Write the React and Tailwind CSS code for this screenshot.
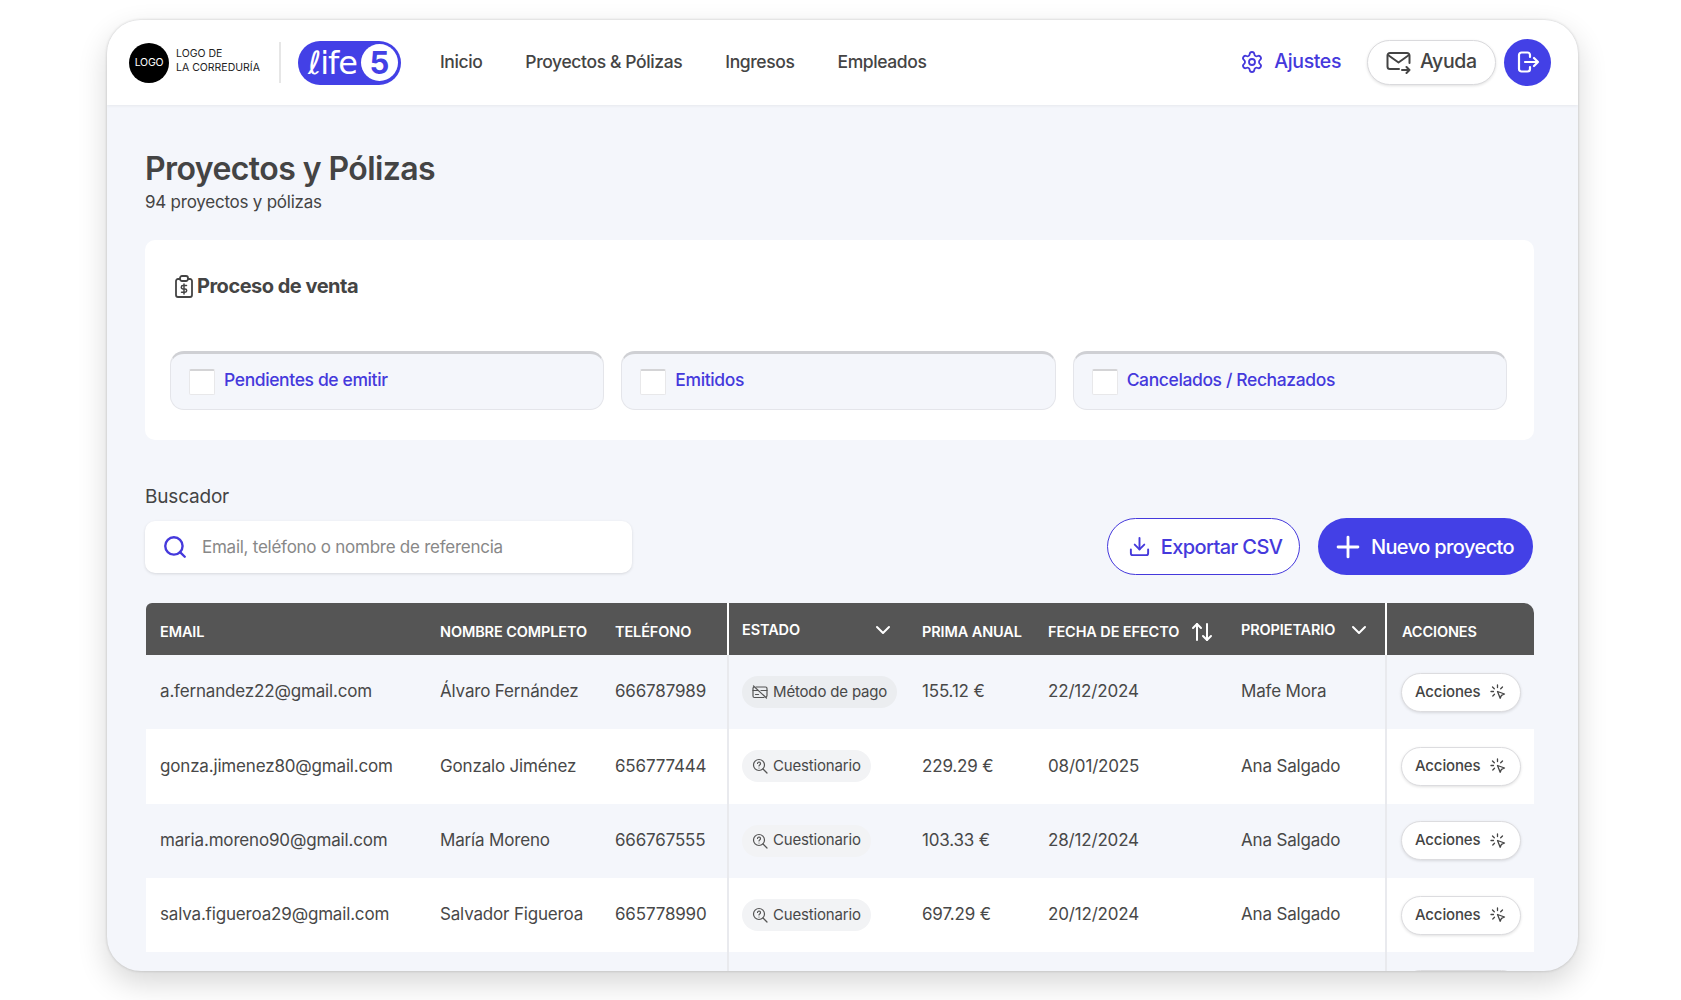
import React from "react";
import { Settings, Download, Plus, Search, ArrowUpDown, ChevronDown } from "lucide-react";

const MailArrow = () => (
  <svg width="25" height="23" viewBox="0 0 25 23" fill="none" stroke="#444" strokeWidth="2" strokeLinecap="round" strokeLinejoin="round">
    <path d="M13 18H4a2.500 2.500 0 0 1-2.500-2.500v-11A2.500 2.500 0 0 1 4 2h17a2.500 2.500 0 0 1 2.500 2.500V12" />
    <path d="M2 4l10.500 7.500L23 4" />
    <path d="M16 19h7.500M20.500 16l3 3-3 3" />
  </svg>
);
const Logout = () => (
  <svg width="24" height="24" viewBox="0 0 24 24" fill="none" stroke="#fff" strokeWidth="2.200" strokeLinecap="round" strokeLinejoin="round">
    <path d="M14 7V5a2.500 2.500 0 0 0-2.500-2.500h-6A2.500 2.500 0 0 0 3 5v14a2.500 2.500 0 0 0 2.500 2.500h6A2.500 2.500 0 0 0 14 19v-2" />
    <path d="M9 12h13M18 8l4 4-4 4" />
  </svg>
);
const ClipboardDollar = () => (
  <svg width="18" height="23" viewBox="0 0 18 23" fill="none" stroke="#444" strokeWidth="1.800" strokeLinecap="round" strokeLinejoin="round">
    <path d="M5 4H3a2 2 0 0 0-2 2v14a2 2 0 0 0 2 2h12a2 2 0 0 0 2-2V6a2 2 0 0 0-2-2h-2" />
    <rect x="5" y="1" width="8" height="5" rx="2" />
    <path d="M11.500 10.500H8a1.600 1.600 0 0 0 0 3.400h2a1.600 1.600 0 0 1 0 3.400H6.500M9 9v10" strokeWidth="1.500" />
  </svg>
);
const CardOff = () => (
  <svg width="16" height="16" viewBox="0 0 16 16" fill="none" stroke="#555" strokeWidth="1.200" strokeLinecap="round" strokeLinejoin="round">
    <path d="M4 3h9.500A1.500 1.500 0 0 1 15 4.500v7c0 .4-.2.800-.4 1M12 13.500H2.500A1.500 1.500 0 0 1 1 12V4.500c0-.5.2-.9.6-1.200" />
    <path d="M1 6.500h5M9 6.500h6M1.500 2l13 12" />
    <path d="M3.500 10.500h3" />
  </svg>
);
const SearchQuestion = () => (
  <svg width="16" height="16" viewBox="0 0 16 16" fill="none" stroke="#555" strokeWidth="1.200" strokeLinecap="round" strokeLinejoin="round">
    <circle cx="7" cy="7" r="5.500" />
    <path d="M11 11l4 4" />
    <path d="M5.500 5.500a1.500 1.500 0 1 1 2.200 1.400c-.5.3-.7.600-.7 1M7 10h.01" />
  </svg>
);
const ClickSpark = () => (
  <svg width="16" height="16" viewBox="0 0 16 16" fill="none" stroke="#444" strokeWidth="1.300" strokeLinecap="round" strokeLinejoin="round">
    <path d="M7.500 1v2.500M2.500 3l1.800 1.800M12.500 3l-1.800 1.800M1 7.500h2.500M2.800 12l1.700-1.700" />
    <path d="M7.500 7.500l7 2.500-3 1.300-1.300 3z" />
  </svg>
);

const Check = ({ label }) => (
  <div className="flex-1 h-[59px] flex items-center pl-[18px] gap-[9px] rounded-[14px] bg-[#f4f6fb] border border-[#e4e5ea] border-t-[3px] border-t-[#cfd0d4]">
    <span className="w-[26px] h-[26px] bg-white border border-[#e8e8ea] border-t-2 border-t-[#d4d4d6] rounded-[2px]" />
    <span className="-mt-[2px] text-[17.500px] font-medium text-[#4539dc] tracking-[-0.022em]">{label}</span>
  </div>
);

const rows = [
  ["a.fernandez22@gmail.com", "Álvaro Fernández", "666787989", "pago", "155.12 €", "22/12/2024", "Mafe Mora"],
  ["gonza.jimenez80@gmail.com", "Gonzalo Jiménez", "656777444", "q", "229.29 €", "08/01/2025", "Ana Salgado"],
  ["maria.moreno90@gmail.com", "María Moreno", "666767555", "q", "103.33 €", "28/12/2024", "Ana Salgado"],
  ["salva.figueroa29@gmail.com", "Salvador Figueroa", "665778990", "q", "697.29 €", "20/12/2024", "Ana Salgado"],
];

const Th = ({ children, className = "" }) => (
  <th className={`text-left font-semibold text-[14.500px] text-white uppercase tracking-[-0.008em] align-middle whitespace-nowrap pt-[5px] ${className}`}>{children}</th>
);

const ActionBtn = () => (
  <button className="flex items-center justify-between w-[120px] h-[39px] pl-[13px] pr-[14px] rounded-full bg-white border border-[#dcdcdf] shadow-[0_1px_3px_rgba(0,0,0,0.12)] text-[15px] font-medium text-[#444] tracking-[-0.01em]">
    Acciones <ClickSpark />
  </button>
);

export default function App() {
  return (
    <div className="min-h-[1000px] bg-white pt-[20px] pl-[107px] font-['Inter','Liberation_Sans',sans-serif] text-[#444]">
      <div className="w-[1471px] h-[951px] rounded-[34px] overflow-hidden bg-[#f4f6fb] shadow-[0_12px_30px_rgba(0,0,0,0.16),0_0_3px_rgba(0,0,0,0.2)]">
        <header className="h-[85px] bg-white flex items-center pl-[22px] pr-[27px] shadow-[0_1px_3px_rgba(0,0,0,0.06)]">
          <div className="w-[40px] h-[40px] rounded-full bg-black text-white text-[10.500px] flex items-center justify-center tracking-[-0.02em]">LOGO</div>
          <div className="ml-[7px] -mt-[4px] text-[10.500px] leading-[14px] text-[#222] whitespace-nowrap">LOGO DE<br />LA CORREDURÍA</div>
          <div className="ml-[19px] w-[2px] h-[41px] bg-[#e6e6e6]" />
          <div className="ml-[17px] w-[103px] h-[44px] rounded-full bg-[#4340e6] flex items-center pl-[10px] pr-[3px] justify-between">
            <span className="text-white text-[32px] leading-none font-normal tracking-[-0.03em] font-['DejaVu_Sans',sans-serif]">ℓife</span>
            <span className="w-[37px] h-[37px] rounded-full bg-white text-[#4340e6] font-bold text-[31px] flex items-center justify-center leading-none">5</span>
          </div>
          <nav className="ml-[39px] flex gap-[43px] text-[17.500px] font-medium text-[#444] tracking-[-0.022em] whitespace-nowrap">
            <span>Inicio</span>
            <span>Proyectos &amp; Pólizas</span>
            <span>Ingresos</span>
            <span>Empleados</span>
          </nav>
          <div className="ml-auto -mt-[1px] flex items-center">
            <Settings className="w-[24px] h-[24px] text-[#4539dc]" strokeWidth={1.800} />
            <span className="ml-[10px] text-[19.500px] font-medium text-[#4539dc] tracking-[-0.02em]">Ajustes</span>
            <button className="ml-[26px] w-[129px] h-[45px] rounded-full bg-white border border-[#dadadd] shadow-[0_1px_3px_rgba(0,0,0,0.12)] flex items-center pl-[18px] gap-[9px] text-[19.500px] font-medium tracking-[-0.02em]">
              <MailArrow /> Ayuda
            </button>
            <button className="ml-[8px] w-[47px] h-[47px] rounded-full bg-[#4340e6] flex items-center justify-center"><Logout /></button>
          </div>
        </header>

        <main className="pl-[38px] w-[1427px] pt-[43px]">
          <h1 className="text-[32px] leading-[42px] font-semibold tracking-[-0.018em] text-[#444]">Proyectos y Pólizas</h1>
          <p className="text-[17px] leading-[24px] tracking-[-0.014em] text-[#444]">94 proyectos y pólizas</p>

          <section className="mt-[26px] h-[200px] bg-white rounded-[10px] pl-[25px] pr-[27px] pt-[35px]">
            <div className="flex items-center gap-[4px] pl-[5px] h-[22px] text-[20px] font-bold tracking-[-0.025em]">
              <ClipboardDollar /> Proceso de venta
            </div>
            <div className="mt-[54px] flex gap-[17px]">
              <Check label="Pendientes de emitir" />
              <Check label="Emitidos" />
              <Check label="Cancelados / Rechazados" />
            </div>
          </section>

          <label className="block mt-[44px] text-[19px] leading-[26px] tracking-[-0.01em]">Buscador</label>
          <div className="mt-[8px] flex items-center justify-between w-[1388px]">
            <div className="w-[487px] h-[52px] bg-white rounded-[10px] shadow-[0_1px_3px_rgba(0,0,0,0.12)] flex items-center pl-[17px] gap-[14px]">
              <Search className="w-[26px] h-[26px] text-[#4539dc]" strokeWidth={2.200} />
              <span className="pt-[2px] text-[17px] text-[#888] tracking-[-0.015em]">Email, teléfono o nombre de referencia</span>
            </div>
            <div className="flex gap-[18px]">
              <button className="w-[193px] h-[57px] rounded-full bg-white border border-[#4539dc] flex items-center justify-center gap-[10px] pl-[3px] text-[20px] font-medium text-[#4539dc] tracking-[-0.03em]">
                <Download className="w-[23px] h-[23px]" strokeWidth={2} /> Exportar CSV
              </button>
              <button className="w-[215px] h-[57px] rounded-full bg-[#4340e6] flex items-center justify-center gap-[6px] pr-[6px] text-[20px] font-medium text-white tracking-[-0.03em]">
                <Plus className="w-[34px] h-[34px]" strokeWidth={2} /> Nuevo proyecto
              </button>
            </div>
          </div>

          <table className="mt-[28px] ml-[1px] w-[1388px] table-fixed border-collapse text-[17px] tracking-[-0.01em] text-[#484848]">
            <colgroup>
              <col className="w-[281px]" /><col className="w-[175px]" /><col className="w-[126px]" /><col className="w-[181px]" />
              <col className="w-[126px]" /><col className="w-[193px]" /><col className="w-[158px]" /><col className="w-[148px]" />
            </colgroup>
            <thead>
              <tr className="h-[52px] bg-[#555]">
                <Th className="pl-[14px] rounded-tl-[6px]">Email</Th>
                <Th className="pl-[13px]">Nombre completo</Th>
                <Th className="pl-[13px]">Teléfono</Th>
                <Th className="pl-[13px] border-l-2 border-white">
                  <div className="flex items-center justify-between pr-[14px] -mt-[4px]">Estado <ChevronDown className="w-[24px] h-[24px]" /></div>
                </Th>
                <Th className="pl-[13px]">Prima anual</Th>
                <Th className="pl-[13px]">
                  <div className="flex items-center gap-[11px]">Fecha de efecto <ArrowUpDown className="w-[24px] h-[24px]" /></div>
                </Th>
                <Th className="pl-[13px]">
                  <div className="flex items-center justify-between pr-[14px] -mt-[4px]">Propietario <ChevronDown className="w-[24px] h-[24px]" /></div>
                </Th>
                <Th className="pl-[15px] border-l-2 border-white rounded-tr-[10px]">Acciones</Th>
              </tr>
            </thead>
            <tbody>
              {rows.map((r, i) => (
                <tr key={r[0]} className={`h-[74.300px] ${i % 2 ? "bg-white" : "bg-[#f4f6fb]"}`}>
                  <td className="pl-[14px] whitespace-nowrap">{r[0]}</td>
                  <td className="pl-[13px] whitespace-nowrap">{r[1]}</td>
                  <td className="pl-[13px]">{r[2]}</td>
                  <td className="pl-[13px] border-l-2 border-[#e9eaee]">
                    <span className={`inline-flex items-center h-[32px] rounded-full px-[10px] gap-[5px] text-[15px] whitespace-nowrap ${r[3] === "pago" ? "bg-[#ebedf0]" : "bg-[#f2f3f5]"}`}>
                      {r[3] === "pago" ? <CardOff /> : <SearchQuestion />}
                      {r[3] === "pago" ? "Método de pago" : "Cuestionario"}
                    </span>
                  </td>
                  <td className="pl-[13px]">{r[4]}</td>
                  <td className="pl-[13px]">{r[5]}</td>
                  <td className="pl-[13px] whitespace-nowrap">{r[6]}</td>
                  <td className="pl-[14px] border-l-2 border-[#e9eaee]"><ActionBtn /></td>
                </tr>
              ))}
              <tr className="h-[74.300px] bg-[#f4f6fb]">
                <td /><td /><td />
                <td className="border-l-2 border-[#e9eaee]" />
                <td /><td /><td />
                <td className="pl-[14px] border-l-2 border-[#e9eaee]">
                  <div className="w-[120px] h-[39px] rounded-full bg-white border border-[#dcdcdf]" />
                </td>
              </tr>
            </tbody>
          </table>
        </main>
      </div>
    </div>
  );
}
